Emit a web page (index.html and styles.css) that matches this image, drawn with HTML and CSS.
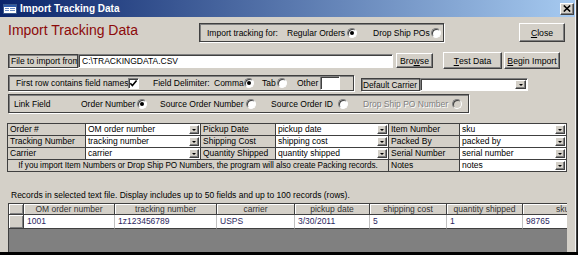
FILE: index.html
```html
<!DOCTYPE html>
<html lang="en">
<head>
<meta charset="utf-8">
<title>Import Tracking Data</title>
<link rel="stylesheet" href="styles.css">
</head>
<body>
<div class="window">
  <div class="titlebar">
    <svg class="app-icon" width="14" height="10" viewBox="0 0 14 10">
      <rect x="0.5" y="0.5" width="13" height="9" fill="#fff" stroke="#3c5a8c"/>
      <rect x="1" y="1" width="12" height="2" fill="#2d5aa8"/>
      <rect x="2" y="4" width="4" height="1" fill="#6b8cc4"/>
      <rect x="7" y="4" width="5" height="1" fill="#6b8cc4"/>
      <rect x="2" y="6" width="4" height="1" fill="#6b8cc4"/>
      <rect x="7" y="6" width="5" height="1" fill="#6b8cc4"/>
    </svg>
    <span class="title">Import Tracking Data</span>
    <span class="tb-close"><svg width="8" height="7" viewBox="0 0 8 7"><path d="M0.8 0.5 L7.2 6.5 M7.2 0.5 L0.8 6.5" stroke="#000" stroke-width="1.6" fill="none"/></svg></span>
  </div>
  <div class="content">
    <div class="row-head">
      <h1 class="heading">Import Tracking Data</h1>
      <div class="box group-for">
        <span class="w-for">Import tracking for:</span>
        <span class="opt w-reg">Regular Orders <i class="radio on"></i></span>
        <span class="opt w-drop">Drop Ship POs <i class="radio"></i></span>
      </div>
      <button class="btn btn-close"><u>C</u>lose</button>
    </div>

    <div class="row-file">
      <div class="box tag tag-file">File to import from</div>
      <div class="textbox file-path">C:\TRACKINGDATA.CSV</div>
      <button class="btn btn-browse">Bro<u>w</u>se</button>
      <button class="btn btn-test"><u>T</u>est Data</button>
      <button class="btn btn-begin"><u>B</u>egin Import</button>
    </div>

    <div class="row-opts">
      <div class="box group-delim">
        <span class="opt s-first">First row contains field names <i class="textbox check"><svg width="9" height="9" viewBox="0 0 9 9"><path d="M1.3 4.2 L3.4 6.6 L7.6 1.6" fill="none" stroke="#000" stroke-width="1.6"/></svg></i></span>
        <span class="s-delim">Field Delimiter:</span>
        <span class="opt s-comma">Comma <i class="radio on"></i></span>
        <span class="opt s-tab">Tab <i class="radio"></i></span>
        <span class="opt s-other">Other <i class="textbox other-box"></i></span>
      </div>
      <div class="carrier">
        <div class="box tag tag-carrier">Default Carrier</div>
        <div class="textbox combo carrier-combo"><i class="dd"></i></div>
      </div>
    </div>

    <div class="box group-link">
      <span class="s-link">Link Field</span>
      <span class="opt s-order">Order Number <i class="radio on"></i></span>
      <span class="opt s-src">Source Order Number <i class="radio"></i></span>
      <span class="opt s-srcid">Source Order ID <i class="radio"></i></span>
      <span class="opt s-dsp disabled">Drop Ship PO Number <i class="radio"></i></span>
    </div>

    <div class="map">
      <div class="m-lbl">Order #</div><div class="m-fld"><span>OM order number</span><i class="dd"></i></div>
      <div class="m-lbl">Pickup Date</div><div class="m-fld"><span>pickup date</span><i class="dd"></i></div>
      <div class="m-lbl">Item Number</div><div class="m-fld"><span>sku</span><i class="dd"></i></div>

      <div class="m-lbl">Tracking Number</div><div class="m-fld"><span>tracking number</span><i class="dd"></i></div>
      <div class="m-lbl">Shipping Cost</div><div class="m-fld"><span>shipping cost</span><i class="dd"></i></div>
      <div class="m-lbl">Packed By</div><div class="m-fld"><span>packed by</span><i class="dd"></i></div>

      <div class="m-lbl">Carrier</div><div class="m-fld"><span>carrier</span><i class="dd"></i></div>
      <div class="m-lbl">Quantity Shipped</div><div class="m-fld"><span>quantity shipped</span><i class="dd"></i></div>
      <div class="m-lbl">Serial Number</div><div class="m-fld"><span>serial number</span><i class="dd"></i></div>

      <div class="m-note">If you import Item Numbers or Drop Ship PO Numbers, the program will also create Packing records.</div>
      <div class="m-lbl">Notes</div><div class="m-fld"><span>notes</span><i class="dd"></i></div>
    </div>

    <p class="records-note">Records in selected text file. Display includes up to 50 fields and up to 100 records (rows).</p>

    <div class="sheet">
      <div class="sel"></div>
      <div class="sh">OM order number</div>
      <div class="sh">tracking number</div>
      <div class="sh">carrier</div>
      <div class="sh">pickup date</div>
      <div class="sh">shipping cost</div>
      <div class="sh">quantity shipped</div>
      <div class="sh">sku</div>

      <div class="sel"></div>
      <div class="sd">1001</div>
      <div class="sd">1z123456789</div>
      <div class="sd">USPS</div>
      <div class="sd">3/30/2011</div>
      <div class="sd">5</div>
      <div class="sd">1</div>
      <div class="sd">98765</div>
    </div>
  </div>
</div>
</body>
</html>
```

FILE: styles.css
```css
* { box-sizing: border-box; }
html { background: #000; }
body {
  margin: 0;
  width: 578px;
  height: 255px;
  overflow: hidden;
  background: #000;
  font-family: "Liberation Sans", Arial, sans-serif;
  font-size: 8.5px;
  line-height: 12px;
  color: #000;
}
i { font-style: normal; }

.window {
  width: 578px;
  height: 252px;
  background: #d4d0c8;
  box-shadow: inset -1px 0 0 #1a1a1a, inset -2px 0 0 #404040, inset -3px 0 0 #f4f4f4;
  overflow: hidden;
}

/* title bar */
.titlebar {
  width: 575px;
  height: 17px;
  display: flex;
  align-items: center;
  padding: 0 1px 0 3px;
  background: linear-gradient(to right, #0a246a, #a6caf0);
}
.app-icon { flex: none; margin-right: 3px; }
.title {
  flex: 1;
  color: #fff;
  font-weight: bold;
  font-size: 10px;
  white-space: nowrap;
}
.tb-close {
  flex: none;
  width: 14px;
  height: 12px;
  display: flex;
  align-items: center;
  justify-content: center;
  background: #d4d0c8;
  border: 1px solid;
  border-color: #fff #404040 #404040 #fff;
  box-shadow: inset -1px -1px 0 #808080;
}

.content { padding-left: 8px; }

/* shared controls */
.box {
  border: 1px solid #404040;
  box-shadow: 1px 1px 0 #fff, inset 1px 1px 0 #808080;
}
.textbox {
  background: #fff;
  border: 1px solid;
  border-color: #808080 #fff #fff #808080;
  box-shadow: inset 1px 1px 0 #404040;
}
.opt {
  display: flex;
  align-items: center;
  justify-content: space-between;
  white-space: nowrap;
}
.radio {
  flex: none;
  position: relative;
  display: block;
  width: 10px;
  height: 10px;
  border-radius: 50%;
  background: #fff;
  border: 1px solid;
  border-color: #808080 #fff #fff #808080;
  box-shadow: inset 1px 1px 0 #404040;
}
.radio.on::after {
  content: "";
  position: absolute;
  left: 2px;
  top: 2px;
  width: 4px;
  height: 4px;
  border-radius: 50%;
  background: #000;
}
.check {
  flex: none;
  width: 11px;
  height: 11px;
  display: flex;
  align-items: center;
  justify-content: center;
}
.btn {
  flex: none;
  margin: 0;
  padding: 0;
  font: inherit;
  font-size: 8.7px;
  line-height: 12px;
  color: #000;
  background: #d4d0c8;
  border: 1px solid;
  border-color: #fff #404040 #404040 #fff;
  box-shadow: inset -1px -1px 0 #808080;
  display: flex;
  align-items: center;
  justify-content: center;
  white-space: nowrap;
}
.dd {
  flex: none;
  display: flex;
  align-items: center;
  justify-content: center;
  background: #d4d0c8;
  border: 1px solid;
  border-color: #fff #404040 #404040 #fff;
  box-shadow: inset -1px -1px 0 #808080;
}
.dd::after {
  content: "";
  border-left: 2px solid transparent;
  border-right: 2px solid transparent;
  border-top: 2px solid #000;
}
.disabled { color: #808080; text-shadow: 1px 1px 0 #fff; }
.disabled .radio { background: #d4d0c8; }

/* header row */
.row-head { display: flex; height: 19px; margin-top: 6px; }
.heading {
  flex: none;
  margin: 0;
  width: 191px;
  font-size: 14px;
  font-weight: normal;
  line-height: 15px;
  color: #8c0a0a;
  white-space: nowrap;
}
.group-for {
  flex: none;
  width: 245px;
  display: flex;
  align-items: center;
  padding-left: 7px;
}
.w-for { width: 80px; white-space: nowrap; }
.w-reg { width: 70px; }
.w-drop { width: 68px; margin-left: 16px; }
.btn-close { margin-left: 75px; width: 46px; height: 19px; }

/* file row */
.row-file { display: flex; align-items: center; height: 17px; margin-top: 10px; }
.tag {
  flex: none;
  display: flex;
  align-items: center;
  padding-left: 2px;
  white-space: nowrap;
  overflow: hidden;
}
.tag-file { width: 70px; height: 14px; }
.file-path {
  width: 315px;
  height: 14px;
  padding-left: 3px;
  display: flex;
  align-items: center;
  white-space: nowrap;
}
.btn-browse { margin-left: 3px; width: 37px; height: 15px; }
.btn-test { margin-left: 10px; width: 59px; height: 17px; }
.btn-begin { margin-left: 2px; width: 56px; height: 17px; }

/* options row */
.row-opts { display: flex; align-items: flex-start; height: 16px; margin-top: 6px; }
.group-delim {
  flex: none;
  width: 346px;
  height: 16px;
  display: flex;
  align-items: center;
  padding-left: 7px;
}
.s-first { width: 122px; }
.s-delim { width: 61px; margin-left: 15px; white-space: nowrap; }
.s-comma { width: 39px; }
.s-tab { width: 25px; margin-left: 9px; }
.s-other { width: 43px; margin-left: 10px; }
.other-box { flex: none; display: block; width: 20px; height: 14px; }
.carrier { display: flex; margin-left: 7px; margin-top: 3px; }
.tag-carrier { width: 59px; height: 13px; font-size: 8.3px; padding-left: 1px; }
.combo {
  display: flex;
  justify-content: flex-end;
  align-items: stretch;
  padding: 1px;
}
.carrier-combo { width: 108px; height: 13px; }
.carrier-combo .dd { width: 11px; }

/* link row */
.group-link {
  width: 461px;
  height: 19px;
  margin-top: 3px;
  display: flex;
  align-items: center;
  padding-left: 5px;
}
.s-link { width: 67px; white-space: nowrap; }
.s-order { width: 66px; }
.s-src { width: 96px; margin-left: 13px; }
.s-srcid { width: 77px; margin-left: 15px; }
.s-dsp { width: 99px; margin-left: 15px; }

/* field mapping grid */
.map {
  display: grid;
  grid-template-columns: 77px 114px 74px 112px 70px 106px;
  grid-template-rows: repeat(4, 11px);
  gap: 1px;
  width: 560px;
  margin: 10px 0 0 -1px;
  background: #404040;
  border: 1px solid #404040;
}
.m-lbl {
  background: #d4d0c8;
  padding-left: 2px;
  line-height: 11px;
  white-space: nowrap;
  overflow: hidden;
}
.m-fld {
  background: #fff;
  display: flex;
  align-items: center;
  padding-left: 2px;
  overflow: hidden;
}
.m-fld span { flex: 1; line-height: 11px; white-space: nowrap; }
.m-fld .dd { width: 10px; height: 9px; margin-right: 1px; }
.m-note {
  grid-column: 1 / 5;
  background: #d4d0c8;
  text-align: center;
  font-size: 8.2px;
  letter-spacing: -0.05px;
  line-height: 11px;
  white-space: nowrap;
  overflow: hidden;
}

/* records datasheet */
.records-note {
  margin: 18px 0 0 3px;
  line-height: 10px;
  white-space: nowrap;
}
.sheet {
  width: 559px;
  height: 49px;
  margin-top: 3px;
  display: grid;
  grid-template-columns: 15px 91px 102px 78px 75px 77px 76px 80px;
  grid-template-rows: 11px 14px;
  align-content: start;
  border-left: 1px solid #404040;
  border-top: 1px solid #404040;
  background: #808080;
  overflow: hidden;
}
.sel {
  background: #d4d0c8;
  border-right: 1px solid #404040;
  border-bottom: 1px solid #404040;
  box-shadow: inset 1px 1px 0 #fff, inset -1px -1px 0 #808080;
}
.sh {
  background: #d4d0c8;
  border-right: 1px solid #404040;
  border-bottom: 1px solid #404040;
  box-shadow: inset 1px 1px 0 #fff;
  text-align: center;
  line-height: 10px;
  color: #333;
  white-space: nowrap;
  overflow: hidden;
}
.sd {
  background: #fff;
  border-right: 1px solid #c0c0c0;
  border-bottom: 1px solid #404040;
  padding-left: 3px;
  line-height: 13px;
  color: #2c1f5e;
  white-space: nowrap;
  overflow: hidden;
}
```
